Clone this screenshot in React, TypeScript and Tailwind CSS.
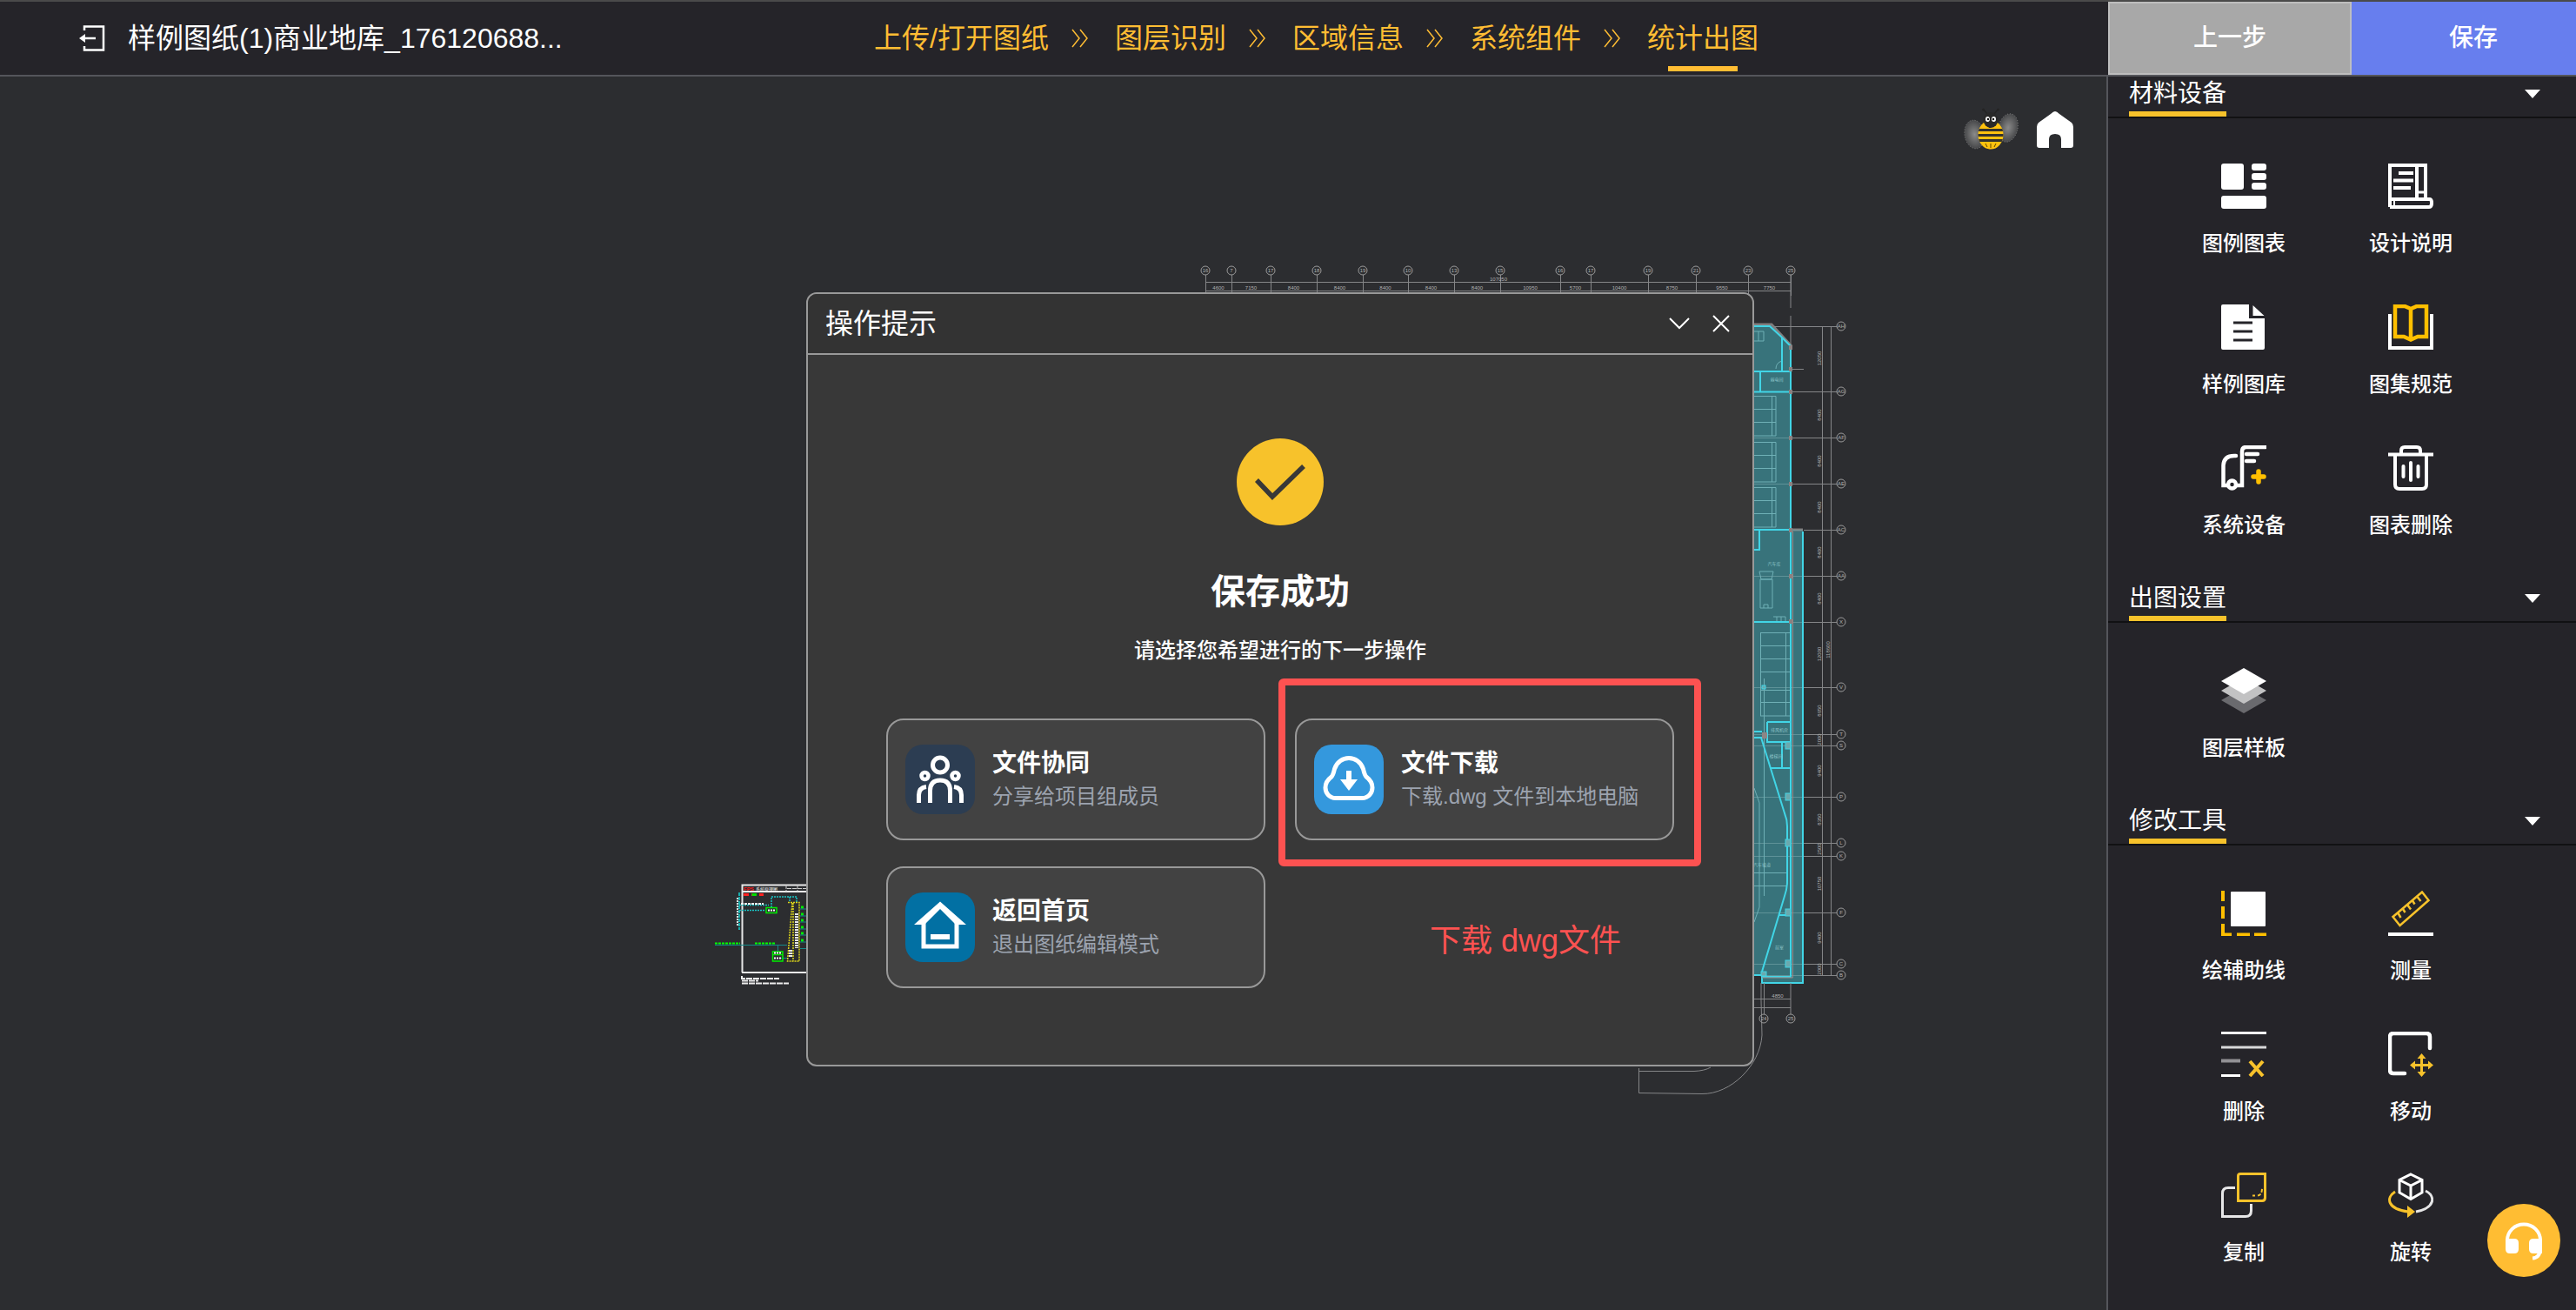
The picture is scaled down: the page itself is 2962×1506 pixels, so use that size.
import { Fragment, type ReactNode } from "react";

const AMBER = "#ffbd33";
const GOLD = "#ffbf00";
const YELLOW = "#f7c22b";

/* ---------- toolbar icons, all on a 52 x 52 grid ---------- */

function Icon({ children }: { children: ReactNode }) {
  return (
    <svg viewBox="0 0 52 52" className="size-[52px]" fill="none" aria-hidden="true">
      {children}
    </svg>
  );
}

const legendIcon = (
  <Icon>
    <g fill="#fff">
      <rect width="26" height="30" rx="3" />
      <rect x="35" width="17" height="8" rx="3" />
      <rect x="35" y="11" width="17" height="8" rx="3" />
      <rect x="35" y="22" width="17" height="8" rx="3" />
      <rect y="37" width="52" height="15" rx="3" />
    </g>
  </Icon>
);

const notesIcon = (
  <Icon>
    <g stroke="#fff" strokeWidth="4">
      <path d="M2 50V2H43V40" />
      <path d="M33 2V40" />
      <path d="M33 33H43" strokeWidth="3" />
      <path d="M2 41H48Q50 41 50 45.500Q50 50 47 50H2" />
      <path d="M7 41V50" strokeWidth="2" />
      <path d="M12 11H29M6 19.500H29M6 28H26" />
    </g>
  </Icon>
);

const libraryIcon = (
  <Icon>
    <path d="M2 0H32V16H50V50Q50 52 48 52H2Q0 52 0 50V2Q0 0 2 0Z" fill="#fff" />
    <path d="M36.500 1L49.500 13H36.500Z" fill="#fff" />
    <path d="M14 21H36M14 31H36M14 41H36" stroke="#252429" strokeWidth="3" />
  </Icon>
);

const atlasIcon = (
  <Icon>
    <path d="M2 11V50H50V11" stroke="#fff" strokeWidth="4" />
    <path d="M26 5L19 2H8V37H18L26 40.500L34 37H44V2H33ZM26 5V40" stroke={GOLD} strokeWidth="4.500" />
  </Icon>
);

const equipmentIcon = (
  <Icon>
    <g stroke="#fff" strokeWidth="4.500" strokeLinecap="round">
      <path d="M17 12H15Q3 12 2.500 23V46H7" />
      <path d="M18 46H24V7Q24 2 29 2H51" />
      <circle cx="12.500" cy="45" r="4.500" />
      <path d="M29 10H42M29 18H38" />
    </g>
    <path d="M43 30V42M37 36H49" stroke={GOLD} strokeWidth="5.500" strokeLinecap="round" />
  </Icon>
);

const trashIcon = (
  <Icon>
    <g stroke="#fff" strokeWidth="4">
      <path d="M0 10.500H52" />
      <path d="M15 10V6Q15 2 19 2H33Q37 2 37 6V10" />
      <path d="M8 11V45Q8 50 13 50H39Q44 50 44 45V11" />
      <path d="M17.500 24V36M26 20V40M34.500 24V36" strokeLinecap="round" />
    </g>
  </Icon>
);

const layersIcon = (
  <Icon>
    <path d="M26 22L52 37L26 52L0 37Z" fill="#6a6a6e" />
    <path d="M26 11L52 26L26 41L0 26Z" fill="#c2c2c3" />
    <path d="M26 0L52 15L26 30L0 15Z" fill="#fff" />
  </Icon>
);

const guideIcon = (
  <Icon>
    <rect x="11" y="1" width="40" height="40" rx="1" fill="#fff" />
    <path
      d="M2 0V12M2 18V32M2 38V50.500H12M18 50.500H33M38 50.500H52"
      stroke={GOLD}
      strokeWidth="4"
    />
  </Icon>
);

const measureIcon = (
  <Icon>
    <path d="M0 50H52" stroke="#fff" strokeWidth="4" />
    <path d="M39 1.500L46.500 11L13.500 40L5.500 30Z" stroke={YELLOW} strokeWidth="2.500" />
    <path d="M11 25L14.500 31M17 21L19.500 25M22 16L26 21.500M28 11.500L30.500 15.500M33.500 7L37.500 12" stroke={YELLOW} strokeWidth="2.500" />
  </Icon>
);

const eraseIcon = (
  <Icon>
    <path d="M0 1.500H52M0 50.500H22" stroke="#fff" strokeWidth="3" />
    <path d="M0 18H52" stroke="#d8d8d9" strokeWidth="3" />
    <path d="M0 33.500H22" stroke="#929195" strokeWidth="4" />
    <path d="M33 34L48 51M48 34L33 51" stroke={YELLOW} strokeWidth="4" />
  </Icon>
);

const moveIcon = (
  <Icon>
    <path
      d="M48 19V6Q48 2 44 2H6Q2 2 2 6V44Q2 48 6 48H19"
      stroke="#fff"
      strokeWidth="4.500"
      strokeLinecap="round"
    />
    <path d="M38.500 28V50M28 38.500H50" stroke={YELLOW} strokeWidth="3" />
    <path
      d="M38.500 25L43.500 31H33.500ZM38.500 52L43.500 46H33.500ZM25 38.500L31 33.500V43.500ZM52 38.500L46 33.500V43.500Z"
      fill={YELLOW}
    />
  </Icon>
);

const copyIcon = (
  <Icon>
    <path d="M16 17.500H8Q1.500 17.500 1.500 24V50.500H28Q34.500 50.500 34.500 44V36" stroke="#e6e6e7" strokeWidth="3" />
    <path d="M22 1.500H50.500V29Q50.500 32.500 47 32.500H19.500V4Q19.500 1.500 22 1.500Z" stroke={YELLOW} strokeWidth="3" />
    <path d="M36 26.500H39M42 26.500Q47 26 47 18" stroke={YELLOW} strokeWidth="2" strokeDasharray="4 2" />
  </Icon>
);

const rotateIcon = (
  <Icon>
    <path
      d="M26 2L39 8.500V23L26 30.500L13 23V8.500ZM13 8.500L26 15L39 8.500M26 15V30"
      stroke="#fff"
      strokeWidth="3"
    />
    <path d="M43 21C55 27 54 41 32 45" stroke="#e6e6e7" strokeWidth="3" />
    <path d="M8 22C-3 29 -1 42 23 45" stroke={YELLOW} strokeWidth="3" />
    <path d="M22 38L31 45L22 52Z" fill={YELLOW} />
  </Icon>
);

/* ---------- header ---------- */

const steps = ["上传/打开图纸", "图层识别", "区域信息", "系统组件", "统计出图"];

function Header() {
  return (
    <header className="flex h-[88px] shrink-0 border-y-2 border-t-[#4a4a4a] border-b-[#54555b] bg-[#252429]">
      <div className="flex min-w-0 flex-1">
        <div className="flex min-w-0 flex-[5] items-center gap-[26px]">
          <button type="button" aria-label="退出" className="ml-[91px] shrink-0">
            <svg viewBox="0 0 30 30" className="size-[30px]" fill="none" stroke="#fff" strokeWidth="2.500">
              <path d="M6 6V1.500H28V28.500H6V24" />
              <path d="M4 15H19" />
              <path d="M0 15L7 10V20Z" fill="#fff" stroke="none" />
            </svg>
          </button>
          <h1 className="truncate text-[32px] leading-[44px] text-white">样例图纸(1)商业地库_176120688...</h1>
        </div>
        <nav className="flex shrink-0 items-center text-[32px] leading-[44px] text-[#ffbd33]">
          {steps.map((step, i) => (
            <Fragment key={step}>
              {i > 0 && (
                <svg
                  viewBox="0 0 20 22"
                  className="mr-[30px] ml-[26px] h-[22px] w-5"
                  fill="none"
                  stroke={AMBER}
                  strokeWidth="1.500"
                  aria-hidden="true"
                >
                  <path d="M1 1L9 11L1 21M10 1L18 11L10 21" />
                </svg>
              )}
              <a href="#" className="relative flex h-full items-center whitespace-nowrap">
                {step}
                {i === steps.length - 1 && (
                  <span className="absolute bottom-1 left-1/2 h-[6px] w-20 -translate-x-1/2 bg-[#ffbd33]" />
                )}
              </a>
            </Fragment>
          ))}
        </nav>
        <div className="flex-[2]" />
      </div>
      <div className="flex w-[538px] shrink-0 overflow-hidden text-[28px] font-medium text-white">
        <button type="button" className="w-[280px] shrink-0 border-2 border-[#bebebe] bg-[#a8a8a8]">
          上一步
        </button>
        <button type="button" className="w-[280px] shrink-0 bg-[#677eee]">
          保存
        </button>
      </div>
    </header>
  );
}

/* ---------- sidebar ---------- */

type Tool = { label: string; icon: ReactNode };

const sections: { title: string; tools: Tool[] }[] = [
  {
    title: "材料设备",
    tools: [
      { label: "图例图表", icon: legendIcon },
      { label: "设计说明", icon: notesIcon },
      { label: "样例图库", icon: libraryIcon },
      { label: "图集规范", icon: atlasIcon },
      { label: "系统设备", icon: equipmentIcon },
      { label: "图表删除", icon: trashIcon },
    ],
  },
  { title: "出图设置", tools: [{ label: "图层样板", icon: layersIcon }] },
  {
    title: "修改工具",
    tools: [
      { label: "绘辅助线", icon: guideIcon },
      { label: "测量", icon: measureIcon },
      { label: "删除", icon: eraseIcon },
      { label: "移动", icon: moveIcon },
      { label: "复制", icon: copyIcon },
      { label: "旋转", icon: rotateIcon },
    ],
  },
];

function Sidebar() {
  return (
    <aside className="w-[540px] shrink-0 overflow-hidden border-l-2 border-[#54555b] bg-[#252429] text-white">
      {sections.map((section) => (
        <section key={section.title}>
          <div className="flex h-12 justify-between border-b-2 border-[#111113] pr-[41px] pl-6">
            <h2 className="border-b-[6px] border-[#f7c22b] text-[28px] leading-10">{section.title}</h2>
            <button type="button" aria-label={`收起${section.title}`} className="pb-[6px]">
              <svg viewBox="0 0 18 10" className="h-[10px] w-[18px]" fill="#fff">
                <path d="M0 0H18L9 10Z" />
              </svg>
            </button>
          </div>
          <div className="grid grid-cols-[192px_192px] gap-y-[54px] px-[60px] pt-[52px] pb-12">
            {section.tools.map((tool) => (
              <button
                key={tool.label}
                type="button"
                className="flex flex-col items-center gap-6 text-2xl font-medium"
              >
                {tool.icon}
                {tool.label}
              </button>
            ))}
          </div>
        </section>
      ))}
    </aside>
  );
}

/* ---------- drawing canvas ---------- */

const topAxes: [number, string][] = [
  [1386, "16"], [1416, "7"], [1461, "17"], [1514, "18"], [1567, "19"], [1619, "10"], [1672, "13"],
  [1725, "15"], [1794, "16"], [1829, "17"], [1895, "19"], [1950, "21"], [2010, "23"], [2059, "25"],
];
const topDims = ["4600", "7150", "8400", "8400", "8400", "8400", "8400", "10950", "5700", "10400", "8750", "9550", "7750"];

const rightAxes: [number, string][] = [
  [375, "AH"], [450, "AG"], [503, "AF"], [556, "AE"], [609, "AC"], [662, "AA"], [715, "X"], [790, "V"],
  [844, "T"], [857, "S"], [916, "P"], [969, "L"], [984, "K"], [1049, "F"], [1108, "C"], [1121, "B"],
];
const rightDims: [number, string][] = [
  [412, "12050"], [477, "8400"], [530, "8400"], [583, "8400"], [635, "8400"], [688, "8400"], [752, "12000"],
  [817, "8650"], [850, "2000"], [886, "9400"], [942, "8350"], [976, "2500"], [1016, "10750"], [1078, "9400"],
  [1114, "2000"],
];

function Axis({ x, y, label }: { x: number; y: number; label: string }) {
  return (
    <>
      <circle cx={x} cy={y} r="5" fill="none" stroke="#9a9a9a" />
      <text x={x} y={y + 2} textAnchor="middle" fontSize="6" fill="#b0b0b0">
        {label}
      </text>
    </>
  );
}

function FloorPlan() {
  return (
    <g>
      {/* top dimension chain */}
      <g stroke="#858688" fill="none">
        <path d="M1386 324.500H2059M1386 334.500H2059M2059 316V354M2059 363V400" />
        {topAxes.map(([x]) => (
          <path key={x} d={`M${x}.500 316V340`} />
        ))}
      </g>
      {topAxes.map(([x, label]) => (
        <Axis key={x} x={x} y={311} label={label} />
      ))}
      <g fontSize="6" fill="#b0b0b0" textAnchor="middle">
        <text x="1723" y="323">107050</text>
        {topDims.map((dim, i) => (
          <text key={i} x={(topAxes[i][0] + topAxes[i + 1][0]) / 2} y="333">
            {dim}
          </text>
        ))}
      </g>

      {/* building body */}
      <path
        d="M1990 374H2038L2059 398V609H2073V1130H2025V1121H1990Z"
        fill="#38737b"
      />
      <path d="M2016 373H2037L2060 398M2059 609H2073" stroke="#807d7d" strokeWidth="3" fill="none" />

      {/* right dimension chain */}
      <g stroke="#858688" fill="none">
        <path d="M2095.500 375V1121M2105.500 375V1121" />
        {rightAxes.map(([y]) => (
          <path key={y} d={`M${y < 600 ? 2061 : 2074} ${y}.500H2112`} />
        ))}
        <path d="M2040 375.500H2061M2061 424.500H2074" />
      </g>
      <g stroke="#6fa0a5" opacity="0.700" fill="none">
        {rightAxes.slice(1).map(([y]) => (
          <path key={y} d={`M2016 ${y}.500H${y < 600 ? 2059 : 2073}`} />
        ))}
      </g>
      {rightAxes.map(([y, label]) => (
        <Axis key={y} x={2117} y={y} label={label} />
      ))}
      <g fontSize="6" fill="#b0b0b0" textAnchor="middle">
        {rightDims.map(([y, dim]) => (
          <text key={y} transform={`translate(2094 ${y}) rotate(-90)`}>
            {dim}
          </text>
        ))}
        <text transform="translate(2104 747) rotate(-90)">118600</text>
      </g>

      {/* parking bays and fittings */}
      <g stroke="#6fb0b6" fill="none">
        {[455, 508, 560].map((y) => (
          <path key={y} d={`M2016 ${y}.500H2042V${y + 46}H2016M2037.500 ${y}V${y + 46}M2016 ${y + 15}.500H2042M2016 ${y + 30}.500H2042`} />
        ))}
        <path d="M2024.500 727V823M2053.500 727V823M2024 727.500H2058M2024 742.500H2058M2024 757.500H2058M2024 772.500H2058M2024 793.500H2058M2024 807.500H2058M2024 823H2058" />
        <path d="M2024 666H2038V699H2024ZM2023 657H2039L2037 666H2025ZM2028 699V695H2033V699M2039 709H2053V714M2043 709V714M2048 709V714M2017 381H2028V392H2017M2022 381V392M2049 415Q2042 417 2042 424" />
        <path d="M2017 906L2023 923V1043L2017 1060M2028.500 780V1030M2016 1003.500H2054M2016 1018.500H2054" />
      </g>

      {/* walls */}
      <g stroke="#41d5e6" strokeWidth="2" fill="none">
        <path d="M2016 375H2035L2048 387L2059 398V1123H2026V1130H2073V611" />
        <path d="M2049 388V426M2016 427H2059M2024 427V450M2016 450.500H2059M2016 609H2059M2023 609V632H2016M2016 715H2059" />
        <path d="M2032 830H2059M2032 830V853H2059M2049 853V883M2036 883H2059M2016 841H2026M2016 848H2026M2046 1052H2059M2016 1121H2026" />
        <path d="M2025 848L2052 935Q2055 942 2055 950V1013Q2055 1022 2052 1030L2026 1117" />
      </g>
      <path d="M2061.500 611V1124H2026" stroke="#9a8785" fill="none" />
      <g fill="#6ba9ae" stroke="#41d5e6">
        {[853, 912, 965, 1045, 1104].map((y) => (
          <rect key={y} x="2053" y={y} width="6" height="8" />
        ))}
        <rect x="2026" y="788" width="4" height="4" />
        <rect x="2025" y="1117" width="6" height="5" />
      </g>
      <rect x="2026" y="842" width="6" height="7" fill="#8d8686" />
      <g fill="#8a8181">
        {[399, 424, 450, 503, 556, 609, 662, 714].map((y) => (
          <rect key={y} x="2057" y={y - 2} width="4" height="5" />
        ))}
      </g>
      <g fontSize="5" fill="#8cc3c8" textAnchor="middle">
        <text x="2043" y="438">弱电间</text>
        <text x="2040" y="650">汽车库</text>
        <text x="2046" y="841">排风机房</text>
        <text x="2042" y="871">楼梯间</text>
        <text x="2026" y="996">汽车坡道</text>
        <text x="2046" y="1091">前室</text>
      </g>

      {/* ramp and bottom axes */}
      <g stroke="#858688" fill="none">
        <path d="M2016 1148.500H2059M2016 1158.500H2059M2028.500 1130V1166M2059 1130V1166M2025 1130V1150" />
        <path d="M2025 1150L2026 1190C2024 1225 1990 1258 1957 1257.500L1884.500 1256.500V1228M1884 1231.500H1948Q1960 1231 1967 1227" />
      </g>
      <Axis x={2028} y={1171} label="24" />
      <Axis x={2059} y={1171} label="25" />
      <text x="2044" y="1147" textAnchor="middle" fontSize="6" fill="#b0b0b0">
        4850
      </text>
    </g>
  );
}

function SystemDiagram() {
  return (
    <g fill="none">
      <path d="M853.500 1118V1017.500H930M853 1025H930M853 1118H930" stroke="#e8e8e8" strokeWidth="2" />
      <path d="M904 1017V1025M917 1017V1025M905 1021.500H928" stroke="#d0d0d0" strokeDasharray="5 1" />
      <text x="855" y="1024" fontSize="6" fontWeight="700" fill="#ff1a1a">FPS</text>
      <text x="869" y="1024" fontSize="5" fill="#fff">系统原理图</text>
      <path d="M855 1028.500H878" stroke="#f22" strokeWidth="3" strokeDasharray="6 3" />
      <path d="M864.500 1028.500H870" stroke="#0d0" strokeWidth="3" />
      <path d="M850 1026V1069" stroke="#1aa9a9" strokeWidth="2" strokeDasharray="4 1" />
      <path d="M848 1032V1065" stroke="#ddd" strokeWidth="2" strokeDasharray="2 1" />
      <path d="M850 1046.500H880M887 1043V1031H916V1037M908 1031V1037M850 1040.500H884" stroke="#19c5c5" strokeWidth="1.500" strokeDasharray="2 1" />
      <path d="M852 1039H878" stroke="#fff" strokeWidth="2" strokeDasharray="3 1" />
      <rect x="881" y="1043.500" width="12" height="6" stroke="#0e0" strokeWidth="1.500" />
      <path d="M883 1046.500H892" stroke="#fff" strokeWidth="2" strokeDasharray="2 1" />
      <path d="M822 1086.500H905M894.500 1086V1094M896 1101.500H906" stroke="#158a8a" />
      <path d="M822 1084.500H851M868 1084.500H892" stroke="#0f0" strokeWidth="2" strokeDasharray="3 1" />
      <path d="M888.500 1094H900V1105H888.500ZM888.500 1097.500H900" stroke="#0e0" strokeWidth="1.500" />
      <path d="M890 1095.500H899M890 1101.500H898" stroke="#fff" strokeWidth="2" strokeDasharray="2 1" />
      <path d="M906 1037.500H919V1105H905.500L911 1037.500M912 1038V1105" stroke="#dcd51a" strokeWidth="1.500" strokeDasharray="2 1" />
      <path d="M916 1050V1090M909 1092V1100" stroke="#e6e6e6" strokeWidth="4" strokeDasharray="2 1" />
      {[1043, 1051, 1058, 1066, 1073, 1081].map((y) => (
        <g key={y}>
          <path d={`M921 ${y}H924`} stroke="#0e0" strokeWidth="3" />
          <path d={`M920 ${y + 2}H930`} stroke="#158a8a" />
        </g>
      ))}
      <path d="M920 1090.500H930" stroke="#158a8a" />
      <path d="M853 1122V1125H896M853 1127.500H872M853 1130.500H907" stroke="#eee" strokeWidth="2" strokeDasharray="7 1" />
    </g>
  );
}

function Bee() {
  return (
    <svg viewBox="0 0 64 48" className="h-12 w-16" aria-hidden="true">
      <defs>
        <radialGradient id="wing">
          <stop offset="0" stopColor="#8a8a8a" />
          <stop offset="1" stopColor="#47484a" />
        </radialGradient>
      </defs>
      <g fill="url(#wing)" stroke="#909090" strokeDasharray="1 2" strokeWidth="0.700">
        <ellipse cx="12.500" cy="30.500" rx="11.500" ry="16.500" transform="rotate(-10 12.500 30.500)" />
        <ellipse cx="51" cy="23" rx="11" ry="16.500" transform="rotate(14 51 23)" />
      </g>
      <clipPath id="bee-body">
        <ellipse cx="31" cy="31" rx="14.500" ry="16.500" />
      </clipPath>
      <g clipPath="url(#bee-body)">
        <path d="M16 14H46V48H16Z" fill="#ffc20e" />
        <path d="M16 25.500H46M16 31.500H46M16 37.500H46" stroke="#33332f" strokeWidth="3" />
        <path d="M25 41L27 45M31 41V46M37 41L35 45" stroke="#5a4500" />
      </g>
      <path d="M27 7L23 2M35 7L39 2" stroke="#242424" strokeWidth="1.500" />
      <circle cx="22.500" cy="2" r="1.500" fill="#242424" />
      <circle cx="39.500" cy="2" r="1.500" fill="#242424" />
      <ellipse cx="31" cy="14" rx="8.500" ry="9" fill="#292929" />
      <ellipse cx="27.500" cy="13" rx="2.500" ry="3" fill="#fff" />
      <ellipse cx="34.500" cy="13" rx="2.500" ry="3" fill="#fff" />
      <circle cx="28" cy="13" r="1.200" fill="#111" />
      <circle cx="34" cy="13" r="1.200" fill="#111" />
    </svg>
  );
}

function Canvas() {
  return (
    <main className="relative min-w-0 flex-1 bg-[#2c2d30]">
      <svg viewBox="0 88 2422 1418" className="absolute inset-0 size-full" aria-label="图纸">
        <FloorPlan />
        <SystemDiagram />
      </svg>
      <div className="relative flex items-start justify-end gap-5 pt-9 pr-[38px]">
        <button type="button" aria-label="智能助手">
          <Bee />
        </button>
        <button type="button" aria-label="首页" className="pt-1">
          <svg viewBox="0 0 42 42" className="size-[42px]" fill="#fff">
            <path d="M21 0Q23 0 26 3L40 13Q42 15 42 18V39Q42 42 39 42H28V32Q28 26 21 26Q14 26 14 32V42H3Q0 42 0 39V18Q0 15 2 13L16 3Q19 0 21 0Z" />
          </svg>
        </button>
      </div>
    </main>
  );
}

/* ---------- save dialog ---------- */

const teamIcon = (
  <svg viewBox="0 0 80 80" className="size-20 shrink-0 rounded-[20px] bg-[#2c3d52]" fill="none" stroke="#fff" strokeWidth="5">
    <circle cx="40" cy="23.500" r="8.500" />
    <circle cx="22.500" cy="36" r="4" strokeWidth="4.500" />
    <circle cx="57.500" cy="36" r="4" strokeWidth="4.500" />
    <path d="M28.500 67V53Q28.500 41 40 41Q51.500 41 51.500 53V67" />
    <path d="M15.500 67V58Q15.500 49.500 24 48.500M64.500 67V58Q64.500 49.500 56 48.500" />
  </svg>
);

const cloudIcon = (
  <svg viewBox="0 0 80 80" className="size-20 shrink-0 rounded-[20px] bg-[#3498dd]" fill="none" stroke="#fff" strokeWidth="5">
    <path d="M25 61.500C17 61.500 13 55 13 49.500C13 44 16 40 20 37C22 35 22.500 32 23.500 28C26 20 33 15.500 40 15.500C47 15.500 54 20 56.500 28C57.500 32 58 35 60 37C64 40 67 44 67 49.500C67 55 63 61.500 55 61.500Z" />
    <path d="M40 30V43" strokeWidth="6" />
    <path d="M30 40H50L40 53Z" fill="#fff" stroke="none" />
  </svg>
);

const homeIcon = (
  <svg viewBox="0 0 80 80" className="size-20 shrink-0 rounded-[20px] bg-[#0270a3]" fill="none" stroke="#fff" strokeWidth="5">
    <path d="M21 35V62H59V35" />
    <path d="M40 10.500L70 37H58L40 19L22 37H10Z" fill="#fff" stroke="none" />
    <path d="M29 51H51" strokeWidth="6" />
  </svg>
);

function ActionCard({ icon, title, hint }: { icon: ReactNode; title: string; hint: string }) {
  return (
    <button
      type="button"
      className="flex h-[140px] w-full items-center gap-5 rounded-[20px] border-2 border-[#999] bg-[#424242] pl-5 text-left"
    >
      {icon}
      <span className="flex flex-col">
        <span className="text-[28px] leading-10 font-bold text-white">{title}</span>
        <span className="text-2xl leading-9 text-[#9ca3af]">{hint}</span>
      </span>
    </button>
  );
}

function SaveDialog() {
  return (
    <div className="fixed inset-0 flex items-start justify-center pt-[336px] pr-[18px]">
      <div
        role="dialog"
        aria-labelledby="dialog-title"
        className="w-[1090px] overflow-hidden rounded-xl border-2 border-[#999] bg-[#383838] text-white"
      >
        <div className="flex h-[70px] items-center border-b-2 border-[#999] bg-[#333] pr-[26px] pl-5">
          <h2 id="dialog-title" className="flex-1 text-[32px] leading-[44px]">操作提示</h2>
          <button type="button" aria-label="收起" className="mr-[26px]">
            <svg viewBox="0 0 24 14" className="h-[14px] w-6" fill="none" stroke="#fff" strokeWidth="2">
              <path d="M1 1L12 12L23 1" />
            </svg>
          </button>
          <button type="button" aria-label="关闭">
            <svg viewBox="0 0 20 20" className="size-5" fill="none" stroke="#fff" strokeWidth="2">
              <path d="M1 1L19 19M19 1L1 19" />
            </svg>
          </button>
        </div>
        <div className="flex flex-col items-center px-[90px] pt-24 pb-[88px]">
          <svg viewBox="0 0 100 100" className="size-[100px]" fill="none" aria-hidden="true">
            <circle cx="50" cy="50" r="50" fill={YELLOW} />
            <path d="M23 48L41 67L77 32" stroke="#383838" strokeWidth="5.500" />
          </svg>
          <h3 className="mt-[52px] text-[40px] leading-[48px] font-bold">保存成功</h3>
          <p className="mt-[26px] text-2xl leading-9 font-medium">请选择您希望进行的下一步操作</p>
          <div className="mt-[60px] grid w-full grid-cols-2 gap-x-[34px] gap-y-[30px]">
            <ActionCard icon={teamIcon} title="文件协同" hint="分享给项目组成员" />
            <div className="relative">
              <ActionCard icon={cloudIcon} title="文件下载" hint="下载.dwg 文件到本地电脑" />
              <div className="pointer-events-none absolute -top-[46px] -right-[31px] -bottom-[30px] -left-[19px] rounded-md border-8 border-[#fd5251]" />
            </div>
            <ActionCard icon={homeIcon} title="返回首页" hint="退出图纸编辑模式" />
            <p className="flex items-center justify-center pt-8 pl-[94px] text-4xl text-[#fd5251]">下载 dwg文件</p>
          </div>
        </div>
      </div>
    </div>
  );
}

function SupportButton() {
  return (
    <button
      type="button"
      aria-label="在线客服"
      className="fixed right-[18px] bottom-[38px] size-[84px] rounded-full bg-[#ffbd33]"
    >
      <svg viewBox="0 0 84 84" className="size-full" fill="none">
        <path d="M23 48V42A19 18.500 0 0 1 61 42V50Q61 62 52 62.500" stroke="#fff" strokeWidth="4" />
        <path d="M21 40H31Q36 40 36 45V52Q36 57 31 57H26Q21 57 21 52Z" fill="#fff" />
        <path d="M63 40H53Q48 40 48 45V52Q48 57 53 57H63Z" fill="#fff" />
      </svg>
    </button>
  );
}

export default function App() {
  return (
    <div className="flex h-screen flex-col overflow-hidden bg-[#2c2d30] font-['Liberation_Sans','Noto_Sans_CJK_SC',sans-serif]">
      <Header />
      <div className="flex min-h-0 flex-1">
        <Canvas />
        <Sidebar />
      </div>
      <SaveDialog />
      <SupportButton />
    </div>
  );
}
